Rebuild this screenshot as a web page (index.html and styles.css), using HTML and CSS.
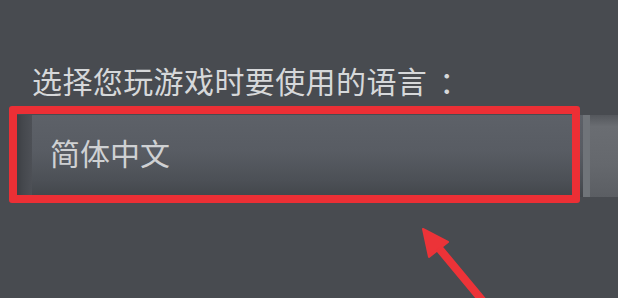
FILE: index.html
```html
<!DOCTYPE html>
<html lang="zh-CN">
<head>
<meta charset="utf-8">
<link rel="stylesheet" href="styles.css">
</head>
<body>
<div class="page">
  <div class="label">选择您玩游戏时要使用的语言<span class="colon">：</span></div>
  <div class="select-wrap">
    <div class="select">
      <div class="select-edge"></div>
      <div class="select-main">简体中文</div>
      <div class="select-button"></div>
    </div>
    <div class="highlight"></div>
  </div>
  <svg class="arrow" viewBox="0 0 618 298" width="618" height="298" aria-hidden="true">
    <line x1="438" y1="247" x2="492" y2="312" stroke="#ec3338" stroke-width="8" stroke-linecap="round"/>
    <polygon points="423,229 448,242 429,257" fill="#ec3338" stroke="#ec3338" stroke-width="2" stroke-linejoin="round"/>
  </svg>
</div>
</body>
</html>
```

FILE: styles.css
```css
html, body {
  margin: 0;
  padding: 0;
  background: #484b50;
  overflow: hidden;
}

.page {
  position: relative;
  width: 618px;
  height: 298px;
  overflow: hidden;
  padding-top: 65px;
  box-sizing: border-box;
  font-family: "Noto Sans CJK SC", "Noto Sans", sans-serif;
}

.label {
  padding-left: 32px;
  font-size: 30px;
  line-height: 30px;
  letter-spacing: 0.4px;
  color: #d6d8da;
  white-space: nowrap;
}

.colon {
  margin-left: 12px;
}

.select-wrap {
  position: relative;
  margin-top: 20px;
  margin-left: 17px;
  width: 620px;
  height: 82px;
}

.select {
  display: flex;
  height: 82px;
  width: 620px;
}

.select-edge {
  flex: 0 0 15px;
  background: linear-gradient(to right, #3c3f44 0%, #45484d 40%, #4d5056 100%);
}

.select-main {
  flex: 0 0 551px;
  box-sizing: border-box;
  padding: 22px 0 0 18px;
  font-size: 30px;
  line-height: 30px;
  letter-spacing: 0;
  color: #cfd1d3;
  background: linear-gradient(to bottom, #5d6168 0%, #585c63 45%, #4c5056 80%, #43464b 100%);
}

.select-button {
  flex: 1 1 auto;
  background: linear-gradient(to bottom, #54575c 0%, #6a6d72 14%, #65686d 60%, #5b5e63 100%);
  border-left: 7px solid #707479;
}

.highlight {
  position: absolute;
  left: -8px;
  top: -9px;
  width: 571px;
  height: 97px;
  box-sizing: border-box;
  border: 8px solid #ec2f35;
  border-radius: 3px;
}

.arrow {
  position: absolute;
  left: 0;
  top: 0;
  pointer-events: none;
}
```
